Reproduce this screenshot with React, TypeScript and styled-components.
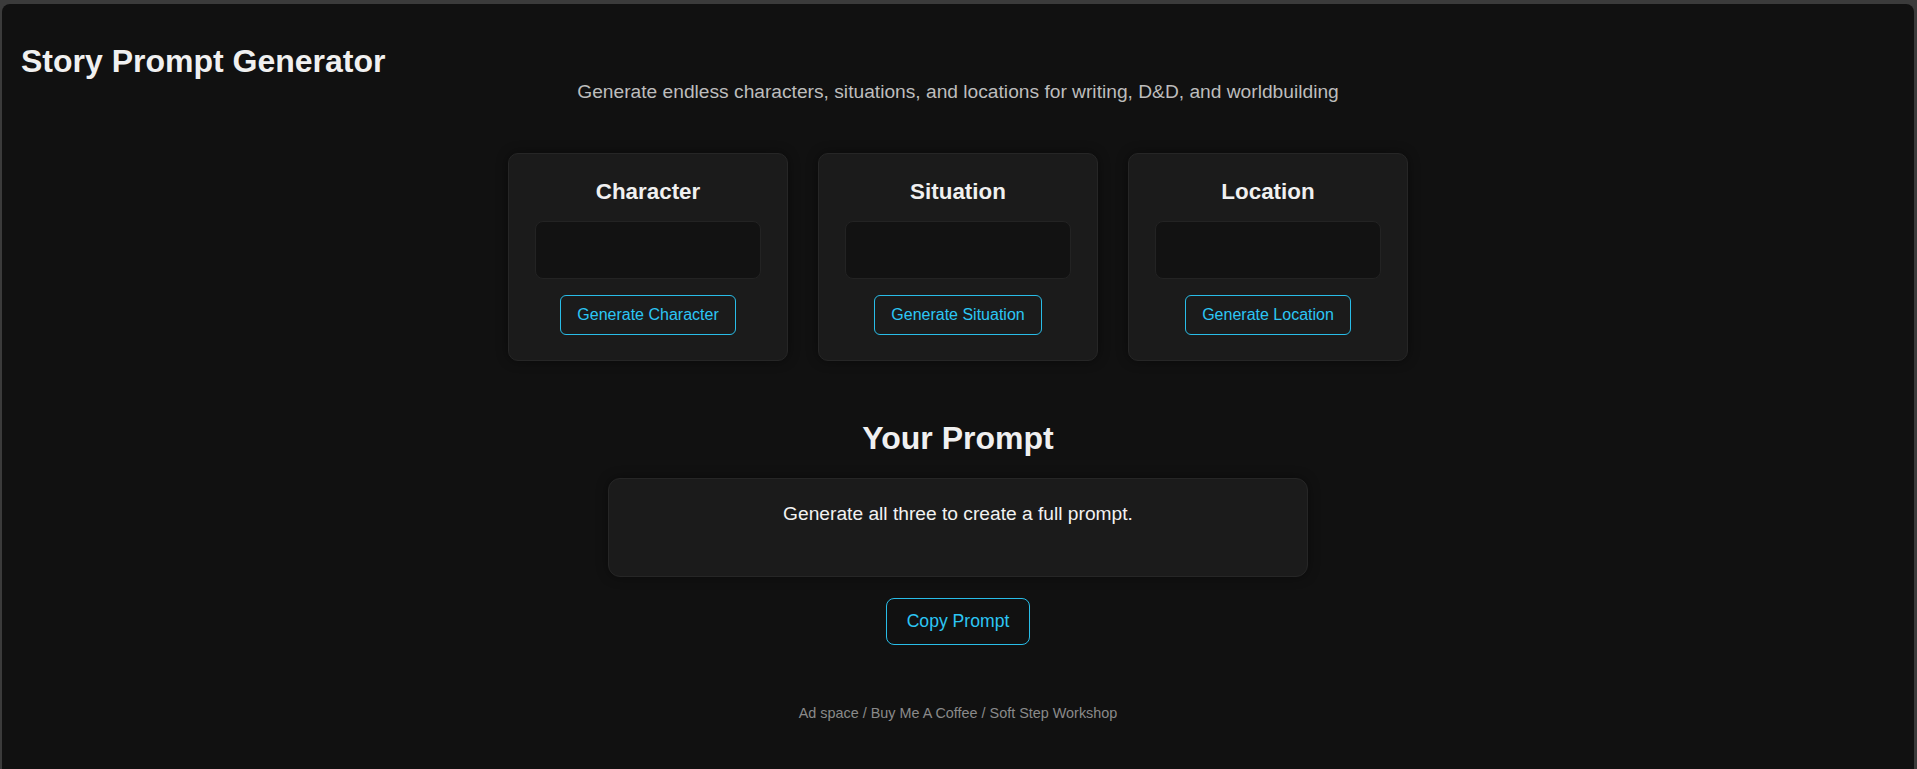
import React from "react";
import styled, { createGlobalStyle } from "styled-components";

const GlobalStyle = createGlobalStyle`
  html, body {
    margin: 0;
    padding: 0;
    background: #3b3b3b;
    font-family: "Liberation Sans", Arial, sans-serif;
  }
  * { box-sizing: border-box; }
`;

const Frame = styled.main`
  margin: 4px 3px 0 2px;
  min-height: calc(100vh - 4px);
  background: #111111;
  border-radius: 8px 8px 0 0;
  padding: 39px 19px 40px;
  color: #eeeeee;
  display: flow-root;
`;

const Title = styled.h1`
  margin: 0 0 1px;
  font-size: 32px;
  font-weight: 700;
  color: #f0f0f0;
`;

const Subtitle = styled.p`
  margin: 0;
  text-align: center;
  font-size: 19.2px;
  color: #bdbdbd;
`;

const CardGrid = styled.section`
  display: grid;
  grid-template-columns: repeat(3, 280px);
  gap: 30px;
  justify-content: center;
  margin-top: 50px;
`;

const Card = styled.div`
  display: flex;
  flex-direction: column;
  align-items: center;
  padding: 25px 26px 25px;
  background: #1b1b1b;
  border: 1px solid #262626;
  border-radius: 10px;
  box-shadow: 0 0 12px rgba(0, 0, 0, 0.45);
`;

const CardTitle = styled.h3`
  margin: 0 0 16px;
  font-size: 22.4px;
  font-weight: 700;
  color: #f0f0f0;
`;

const OutputBox = styled.div`
  width: 100%;
  height: 58px;
  background: #121212;
  border: 1px solid #232323;
  border-radius: 8px;
`;

const OutlineButton = styled.button<{ $size?: "md" | "lg" }>`
  font-family: "Liberation Sans", Arial, sans-serif;
  font-size: ${(p) => (p.$size === "lg" ? "17.6px" : "16px")};
  padding: ${(p) => (p.$size === "lg" ? "12px 20px" : "10px 16px")};
  line-height: normal;
  color: #2cc6f5;
  background: transparent;
  border: 1px solid #29bde8;
  border-radius: ${(p) => (p.$size === "lg" ? "8px" : "6px")};
  cursor: pointer;
`;

const CardButton = styled(OutlineButton)`
  margin-top: 16px;
`;

const PromptSection = styled.section`
  display: flex;
  flex-direction: column;
  align-items: center;
  margin-top: 59px;
`;

const SectionTitle = styled.h2`
  margin: 0 0 21px;
  font-size: 32px;
  font-weight: 700;
  color: #f0f0f0;
`;

const PromptBox = styled.div`
  width: 700px;
  min-height: 99px;
  padding: 24px;
  background: #1b1b1b;
  border: 1px solid #262626;
  border-radius: 12px;
  text-align: center;
  font-size: 19.2px;
  color: #f2f2f2;
  box-shadow: 0 0 12px rgba(0, 0, 0, 0.4);
`;

const CopyButton = styled(OutlineButton)`
  margin-top: 21px;
`;

const Footer = styled.footer`
  margin-top: 60px;
  text-align: center;
  font-size: 14.4px;
  color: #8a8a8a;
`;

const generators = ["Character", "Situation", "Location"];

export default function App() {
  return (
    <>
      <GlobalStyle />
      <Frame>
        <Title>Story Prompt Generator</Title>
        <Subtitle>
          Generate endless characters, situations, and locations for writing, D&amp;D, and worldbuilding
        </Subtitle>
        <CardGrid>
          {generators.map((g) => (
            <Card key={g}>
              <CardTitle>{g}</CardTitle>
              <OutputBox />
              <CardButton>Generate {g}</CardButton>
            </Card>
          ))}
        </CardGrid>
        <PromptSection>
          <SectionTitle>Your Prompt</SectionTitle>
          <PromptBox>Generate all three to create a full prompt.</PromptBox>
          <CopyButton $size="lg">Copy Prompt</CopyButton>
        </PromptSection>
        <Footer>Ad space / Buy Me A Coffee / Soft Step Workshop</Footer>
      </Frame>
    </>
  );
}
